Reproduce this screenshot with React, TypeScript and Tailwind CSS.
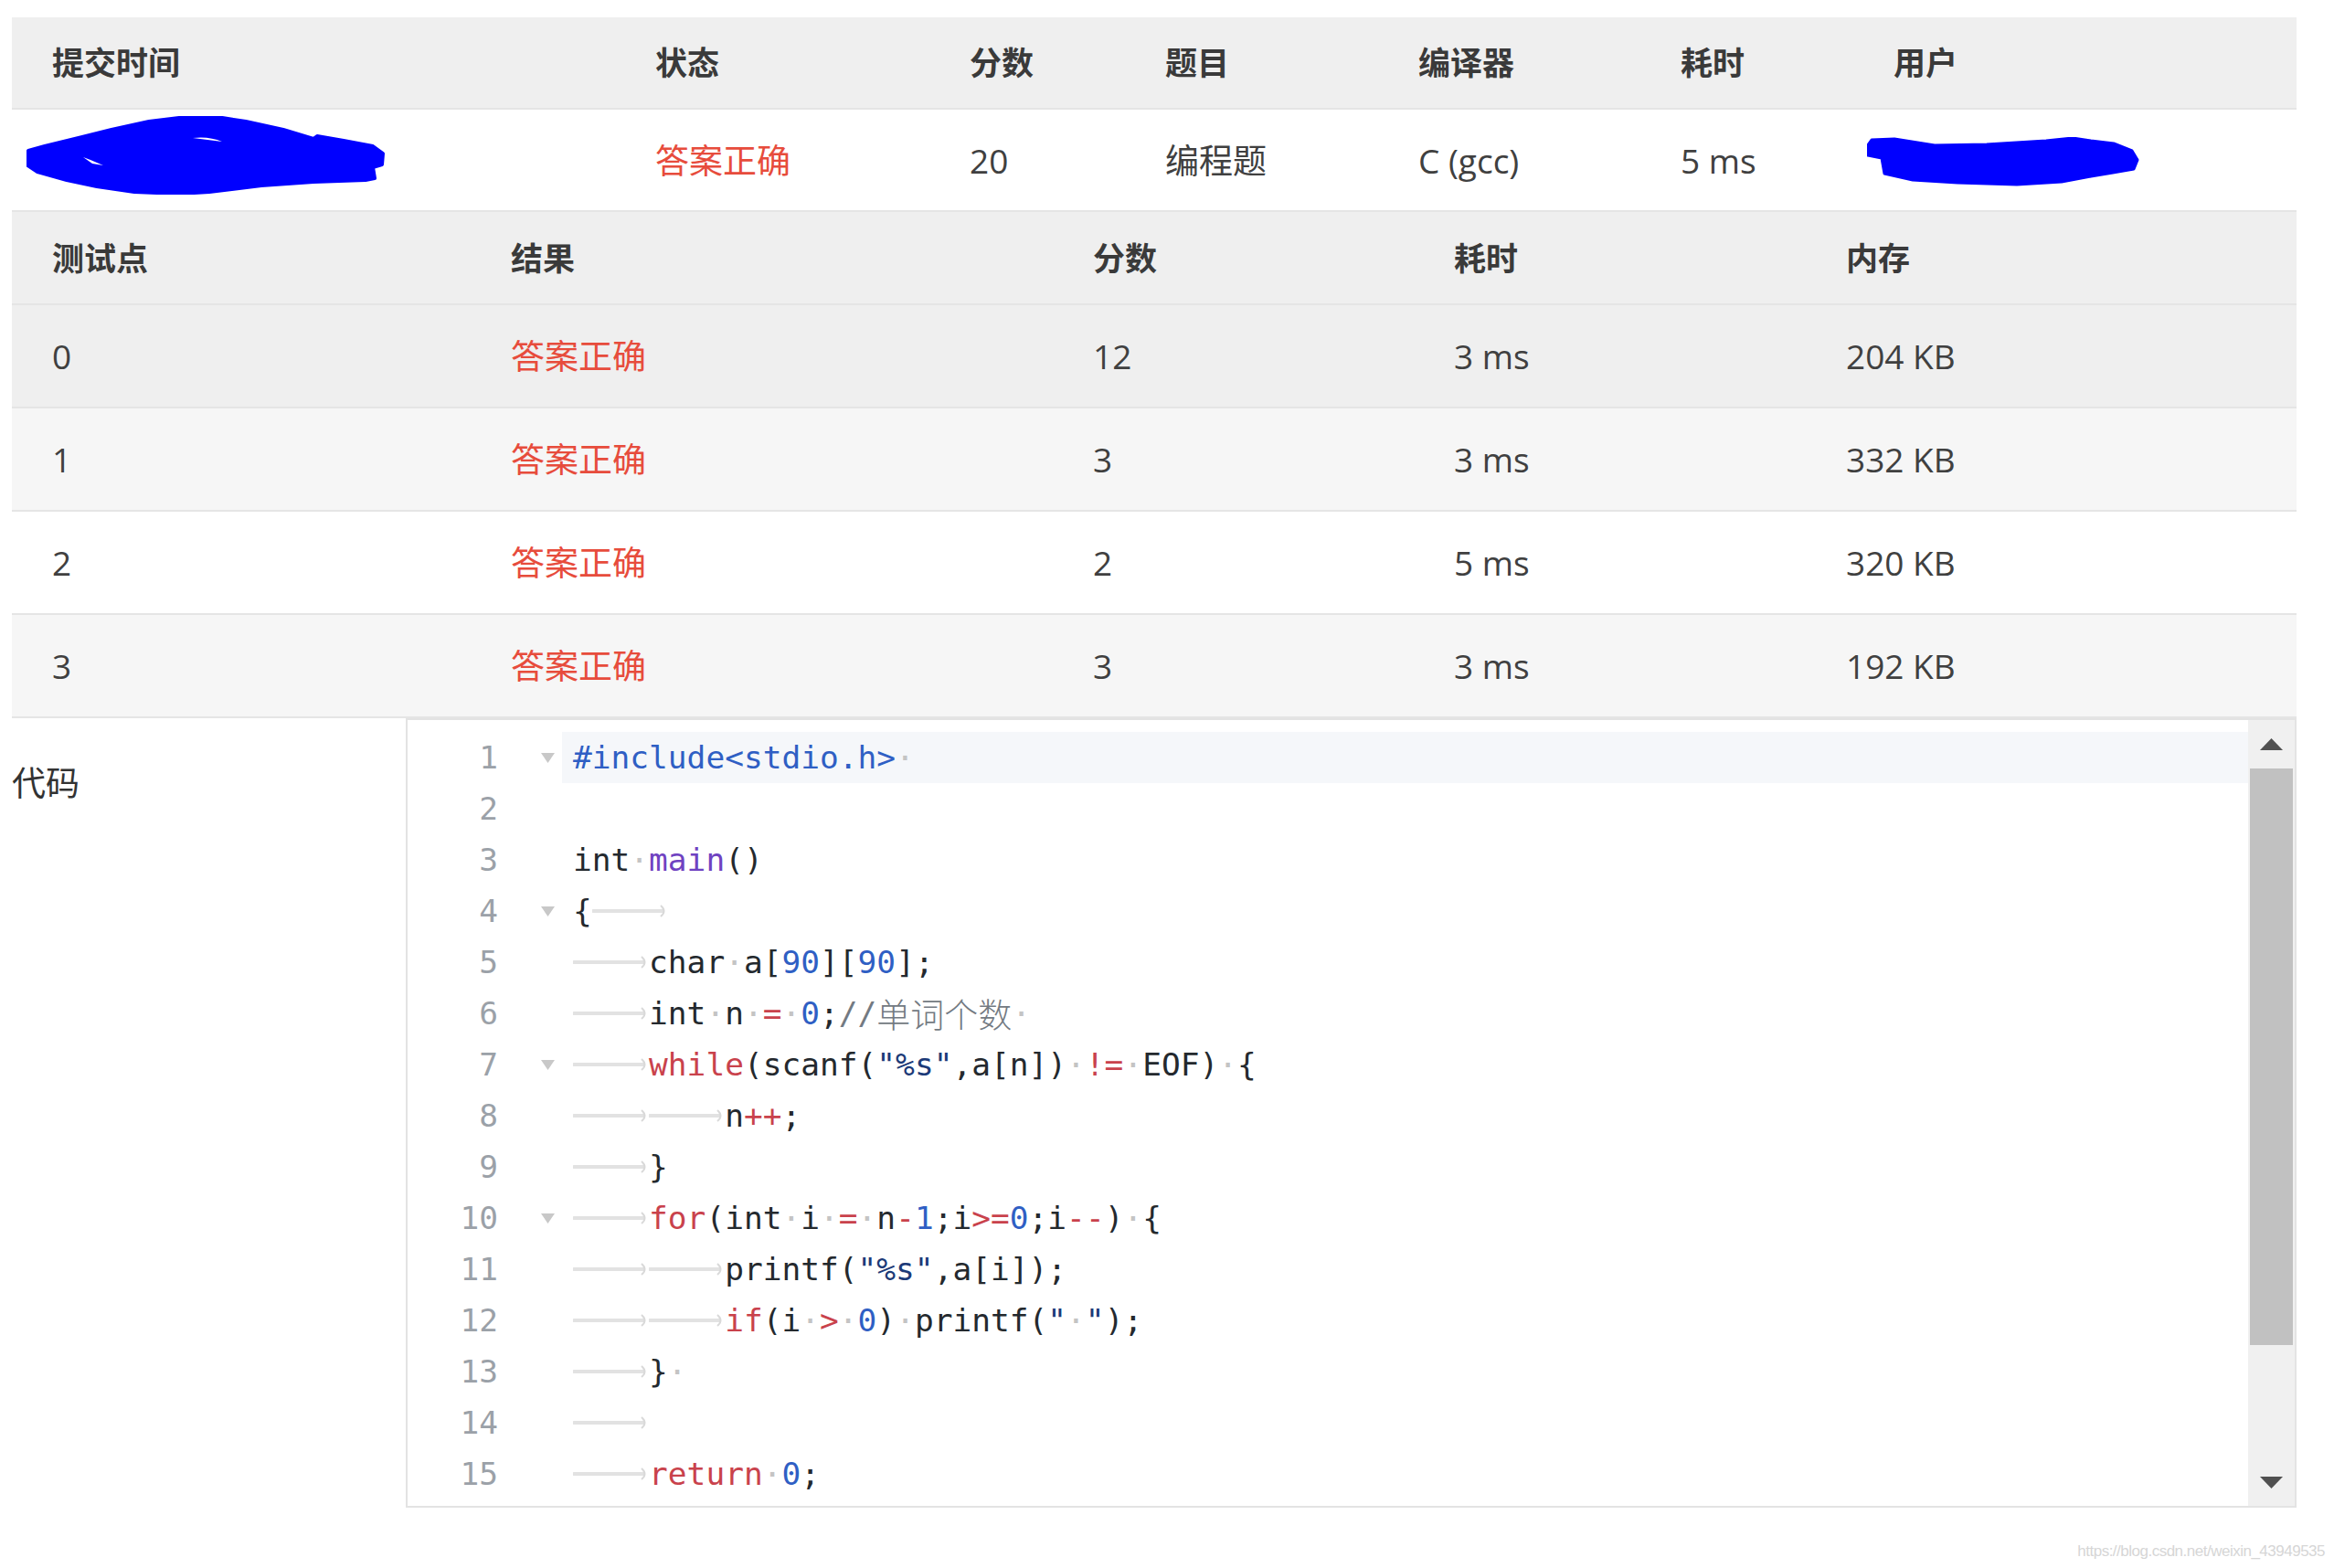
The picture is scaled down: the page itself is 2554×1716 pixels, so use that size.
import React from "react";

type Tok = [string, string];

const colorOf: Record<string, string> = {
  d: "text-[#24292e]",
  k: "text-[#c9424c]",
  n: "text-[#2f5fc4]",
  p: "text-[#6f42c1]",
  s: "text-[#1c3a78]",
  c: "text-[#737a82]",
  i: "text-[#2f5fc4]",
};

const T: Tok = ["T", ""];
const S: Tok = ["S", ""];

const lines: { toks: Tok[]; fold?: boolean }[] = [
  { toks: [["i", "#include<stdio.h>"], S], fold: true },
  { toks: [] },
  { toks: [["d", "int"], S, ["p", "main"], ["d", "()"]] },
  { toks: [["d", "{"], T], fold: true },
  { toks: [T, ["d", "char"], S, ["d", "a["], ["n", "90"], ["d", "]["], ["n", "90"], ["d", "];"]] },
  {
    toks: [T, ["d", "int"], S, ["d", "n"], S, ["k", "="], S, ["n", "0"], ["d", ";"], ["c", "//"], ["C", "单词个数"], S],
  },
  {
    toks: [
      T, ["k", "while"], ["d", "(scanf("], ["s", "\"%s\""], ["d", ",a[n])"], S, ["k", "!="], S, ["d", "EOF)"], S, ["d", "{"],
    ],
    fold: true,
  },
  { toks: [T, T, ["d", "n"], ["k", "++"], ["d", ";"]] },
  { toks: [T, ["d", "}"]] },
  {
    toks: [
      T, ["k", "for"], ["d", "(int"], S, ["d", "i"], S, ["k", "="], S, ["d", "n"], ["k", "-"], ["n", "1"], ["d", ";i"], ["k", ">="], ["n", "0"], ["d", ";i"], ["k", "--"], ["d", ")"], S, ["d", "{"],
    ],
    fold: true,
  },
  { toks: [T, T, ["d", "printf("], ["s", "\"%s\""], ["d", ",a[i]);"]] },
  {
    toks: [
      T, T, ["k", "if"], ["d", "(i"], S, ["k", ">"], S, ["n", "0"], ["d", ")"], S, ["d", "printf("], ["s", "\""], S, ["s", "\""], ["d", ");"],
    ],
  },
  { toks: [T, ["d", "}"], S] },
  { toks: [T] },
  { toks: [T, ["k", "return"], S, ["n", "0"], ["d", ";"]] },
];

function TabArrow() {
  return (
    <span className="inline-flex w-[4ch] h-[56px] items-center shrink-0">
      <svg width="83" height="16" viewBox="0 0 83 16" className="block">
        <line x1="1" y1="8" x2="77" y2="8" stroke="#e2e2e2" strokeWidth="4" strokeLinecap="round" />
        <path d="M75 2 Q82 8 75 14" stroke="#d9d9d9" strokeWidth="2" fill="none" />
      </svg>
    </span>
  );
}

function CodeLine({ toks }: { toks: Tok[] }) {
  return (
    <>
      {toks.map((t, i) => {
        if (t[0] === "T") return <TabArrow key={i} />;
        if (t[0] === "S")
          return (
            <span key={i} className="inline-block w-[1ch] text-center text-[#c4c4c4]">
              ·
            </span>
          );
        if (t[0] === "C")
          return (
            <span key={i} className="text-[#737a82] text-[37px] leading-[56px] font-['Noto_Sans_CJK_SC',sans-serif] font-light">
              {t[1]}
            </span>
          );
        return (
          <span key={i} className={colorOf[t[0]]}>
            {t[1]}
          </span>
        );
      })}
    </>
  );
}

function FoldMark() {
  return (
    <svg width="15" height="11" viewBox="0 0 15 11" className="block">
      <polygon points="0,0 15,0 7.5,11" fill="#c8c8c8" />
    </svg>
  );
}

function Scribble1() {
  return (
    <svg width="392" height="86" viewBox="0 0 392 86" className="absolute left-[16px] top-[7px]">
      <polygon
        points="2,38 20,33 61,23 93,15 134,6 175,1 208,1 240,6 281,15 314,25 318,22 347,27 379,33 390,41 389,53 379,56 381,68 371,70 314,72 257,76 200,83 167,85 118,83 77,77 44,70 12,61 0,53 0,43"
        fill="#0000ff"
        stroke="#0000ff"
        strokeWidth="4"
        strokeLinejoin="round"
      />
      <path d="M182 24 Q200 22 214 28 Q198 26 182 24 Z" fill="#ffffff" />
      <path d="M62 45 L70 48 L84 54 L72 52 Z" fill="#ffffff" />
    </svg>
  );
}

function Scribble2() {
  return (
    <svg width="298" height="54" viewBox="0 0 298 54" className="absolute left-[15px] top-[30px]">
      <polygon
        points="5,3 30,2 74,9 131,8 196,4 225,1 245,4 270,7 290,15 296,25 292,35 269,39 245,43 213,49 164,52 99,50 50,47 19,40 16,23 1,20 0,10"
        fill="#0000ff"
        stroke="#0000ff"
        strokeWidth="3"
        strokeLinejoin="round"
      />
    </svg>
  );
}

const head1 = ["提交时间", "状态", "分数", "题目", "编译器", "耗时", "用户"];
const head2 = ["测试点", "结果", "分数", "耗时", "内存"];
const rows = [
  { n: "0", s: "12", t: "3 ms", m: "204 KB", bg: "bg-[#efefef]" },
  { n: "1", s: "3", t: "3 ms", m: "332 KB", bg: "bg-[#f6f6f6]" },
  { n: "2", s: "2", t: "5 ms", m: "320 KB", bg: "bg-white" },
  { n: "3", s: "3", t: "3 ms", m: "192 KB", bg: "bg-[#f6f6f6]" },
];

export default function App() {
  return (
    <div className="w-[2554px] h-[1716px] bg-white overflow-hidden font-['Open_Sans','Noto_Sans_CJK_SC',sans-serif] text-[#404040]">
      <div className="ml-[13px] w-[2500px] pt-[19px]">
        {/* Submission table */}
        <div className="grid grid-cols-[660px_344px_214px_277px_287px_233px_485px] h-[101px] bg-[#efefef] border-b-2 border-[#e5e5e5]">
          {head1.map((h) => (
            <div key={h} className="pl-[44px] flex items-center text-[35px] font-bold text-[#3a3a3a] leading-none">
              {h}
            </div>
          ))}
        </div>
        <div className="grid grid-cols-[660px_344px_214px_277px_287px_233px_485px] h-[112px] bg-white border-b-2 border-[#e5e5e5] text-[37px] leading-none">
          <div className="relative">
            <Scribble1 />
          </div>
          <div className="pl-[44px] flex items-center text-[#e74c3c]">答案正确</div>
          <div className="pl-[44px] flex items-center">20</div>
          <div className="pl-[44px] flex items-center">编程题</div>
          <div className="pl-[44px] flex items-center">C (gcc)</div>
          <div className="pl-[44px] flex items-center">5 ms</div>
          <div className="relative">
            <Scribble2 />
          </div>
        </div>

        {/* Test cases table */}
        <div className="grid grid-cols-[502px_637px_395px_429px_537px] h-[102px] bg-[#efefef] border-b-2 border-[#e5e5e5]">
          {head2.map((h) => (
            <div key={h} className="pl-[44px] flex items-center text-[35px] font-bold text-[#3a3a3a] leading-none">
              {h}
            </div>
          ))}
        </div>
        {rows.map((r) => (
          <div
            key={r.n}
            className={`grid grid-cols-[502px_637px_395px_429px_537px] h-[113px] border-b-2 border-[#e5e5e5] text-[37px] leading-none ${r.bg}`}
          >
            <div className="pl-[44px] flex items-center">{r.n}</div>
            <div className="pl-[44px] flex items-center text-[#e74c3c]">答案正确</div>
            <div className="pl-[44px] flex items-center">{r.s}</div>
            <div className="pl-[44px] flex items-center">{r.t}</div>
            <div className="pl-[44px] flex items-center">{r.m}</div>
          </div>
        ))}

        {/* Code section */}
        <div className="flex">
          <div className="w-[431px] pt-[43px] text-[37px] leading-[56px] text-[#333333]">代码</div>
          <div className="w-[2069px] h-[864px] border-2 border-[#e3e3e3] flex bg-white">
            <div className="flex-1 pt-[13px] font-['DejaVu_Sans_Mono','Noto_Sans_CJK_SC',monospace] text-[34.5px] whitespace-pre">
              {lines.map((ln, idx) => (
                <div key={idx} className="flex h-[56px] items-center">
                  <div className="w-[99px] text-right text-[#9ba1a8] leading-[56px]">{idx + 1}</div>
                  <div className="w-[70px] h-[56px] flex items-center pl-[47px]">{ln.fold ? <FoldMark /> : null}</div>
                  <div
                    className={`flex-1 h-[56px] flex items-center pl-[12px] leading-[56px] ${idx === 0 ? "bg-[#f5f7fa]" : ""}`}
                  >
                    <CodeLine toks={ln.toks} />
                  </div>
                </div>
              ))}
            </div>
            <div className="w-[51px] bg-[#f0f0f0] flex flex-col">
              <div className="h-[53px] flex items-center justify-center">
                <svg width="25" height="13" viewBox="0 0 25 13">
                  <polygon points="12.5,0 25,13 0,13" fill="#505050" />
                </svg>
              </div>
              <div className="mx-[2px] h-[631px] bg-[#c1c1c1]" />
              <div className="flex-1" />
              <div className="h-[52px] flex items-center justify-center">
                <svg width="25" height="13" viewBox="0 0 25 13">
                  <polygon points="0,0 25,0 12.5,13" fill="#505050" />
                </svg>
              </div>
            </div>
          </div>
        </div>
      </div>
      <div className="mt-[36px] pr-[10px] text-right text-[17px] leading-[24px] tracking-[-0.5px] text-[#d6d6d6] font-['Liberation_Sans',Arial,sans-serif]">
        https://blog.csdn.net/weixin_43949535
      </div>
    </div>
  );
}
